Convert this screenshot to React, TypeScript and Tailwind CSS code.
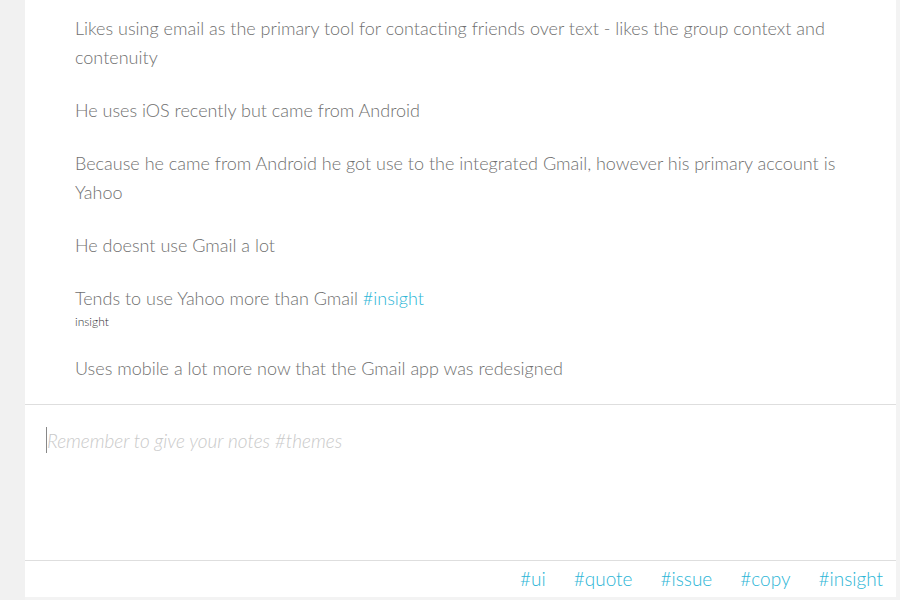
import React from 'react';

const notes: { text: string; tag?: string }[] = [
  { text: 'Likes using email as the primary tool for contacting friends over text - likes the group context and contenuity' },
  { text: 'He uses iOS recently but came from Android' },
  { text: 'Because he came from Android he got use to the integrated Gmail, however his primary account is Yahoo' },
  { text: 'He doesnt use Gmail a lot' },
  { text: 'Tends to use Yahoo more than Gmail', tag: 'insight' },
  { text: 'Uses mobile a lot more now that the Gmail app was redesigned' },
];

const tags = ['ui', 'quote', 'issue', 'copy', 'insight'];

export default function App() {
  return (
    <div className="flex h-[600px] w-[900px] bg-[#f3f3f3]" style={{ fontFamily: 'Lato, "Noto Sans", sans-serif' }}>
      <div className="w-[25px] shrink-0 bg-[#f1f1f1]" />
      <div className="flex h-[597px] w-[871px] flex-col bg-white">
        {/* заметки */}
        <div className="flex flex-col gap-[24px] px-[50px] pt-[14px] pb-[21px] text-[18px] font-light leading-[29px] text-[#707070]">
          {notes.map((n, i) => (
            <div key={i}>
              <p>
                {n.text}
                {n.tag && <span className="text-[#2bb5d6]"> #{n.tag}</span>}
              </p>
              {n.tag && <p className="mt-[1px] text-[12px] leading-[16px] font-light text-[#333]">{n.tag}</p>}
            </div>
          ))}
        </div>
        <div className="border-t border-[#dedede]" />
        {/* поле ввода */}
        <div className="flex h-[155px] items-start pl-[21px] pt-[22px]">
          <div className="h-[26px] w-px bg-[#888]" />
          <span className="text-[19px] font-light italic leading-[28px] text-[#c9c9c9]">Remember to give your notes #themes</span>
        </div>
        <div className="border-t border-[#dedede]" />
        <div className="flex flex-1 items-center justify-end gap-[28px] pr-[13px] text-[19px] font-light text-[#2bb5d6]">
          {tags.map(t => (
            <span key={t}>#{t}</span>
          ))}
        </div>
      </div>
      <div className="flex-1 bg-[#f3f3f3]" />
    </div>
  );
}
